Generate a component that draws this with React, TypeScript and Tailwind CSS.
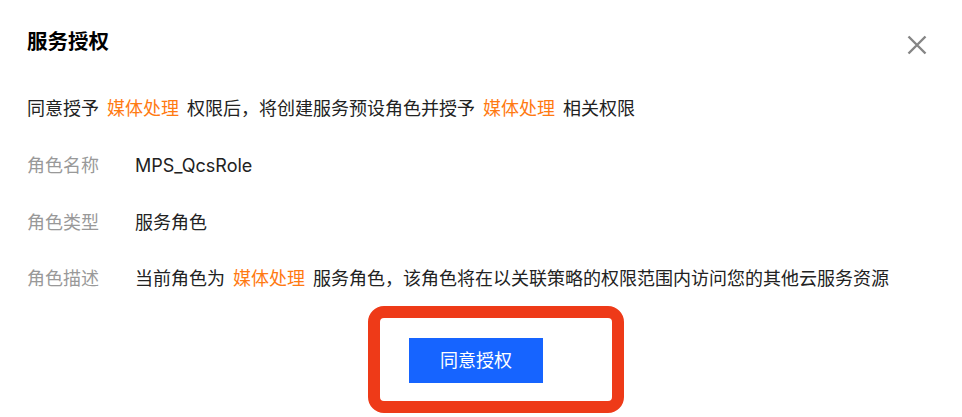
import React from "react";

const Hl = ({ children }: { children: React.ReactNode }) => (
  <span className="mx-2 text-[#ff7a12]">{children}</span>
);

const rows = [
  { label: "角色名称", value: <>MPS_QcsRole</> },
  { label: "角色类型", value: <>服务角色</> },
  {
    label: "角色描述",
    value: (
      <>
        当前角色为<Hl>媒体处理</Hl>服务角色，该角色将在以关联策略的权限范围内访问您的其他云服务资源
      </>
    ),
  },
];

const App = () => {
  return (
    <div
      className="relative h-[417px] w-[962px] overflow-hidden bg-white px-[27px] pt-[28px] text-[#222]"
      style={{ fontFamily: 'Inter, "Noto Sans CJK SC", sans-serif' }}
    >
      {/* Header */}
      <div className="flex items-center justify-between">
        <h2 className="text-[20.5px] font-bold leading-[28px] text-black">服务授权</h2>
        <button className="mr-[8px] mt-[6px] text-[#858585]">
          <svg width="20" height="20" viewBox="0 0 20 20" fill="none">
            <path d="M1.5 1.5L18.5 18.5M18.5 1.5L1.5 18.5" stroke="currentColor" strokeWidth="2.4" />
          </svg>
        </button>
      </div>

      <p className="mt-[40px] text-[18px] leading-[26px]">
        同意授予<Hl>媒体处理</Hl>权限后，将创建服务预设角色并授予<Hl>媒体处理</Hl>相关权限
      </p>

      {/* Role info */}
      <div className="mt-[31px] flex flex-col gap-[30.5px]">
        {rows.map((r) => (
          <div key={r.label} className="flex text-[18px] leading-[26px]">
            <span className="w-[108px] shrink-0 text-[#999]">{r.label}</span>
            <span>{r.value}</span>
          </div>
        ))}
      </div>

      <div className="mt-[46px] flex justify-center pr-[10px]">
        <button className="h-[45px] w-[134px] bg-[#1664ff] text-[18px] text-white">同意授权</button>
      </div>

      {/* annotation box */}
      <div className="pointer-events-none absolute left-[368px] top-[306px] h-[107px] w-[256px] rounded-[16px] border-[12px] border-[#ee3a18]" />
    </div>
  );
};

export default App;
